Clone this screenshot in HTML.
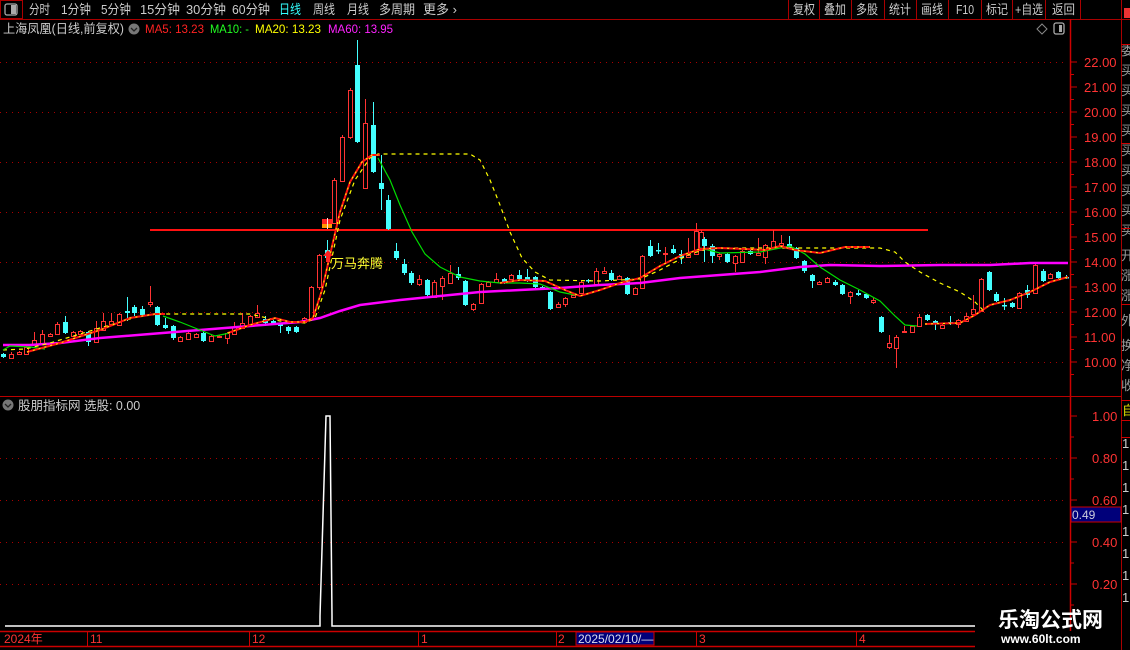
<!DOCTYPE html>
<html><head><meta charset="utf-8">
<style>
html,body{margin:0;padding:0;background:#000;width:1130px;height:650px;overflow:hidden}
svg{display:block}
text{font-family:"Liberation Sans","Noto Sans CJK SC",sans-serif}
</style></head>
<body>
<svg id="s" width="1130" height="650" xmlns="http://www.w3.org/2000/svg">
<rect width="1130" height="650" fill="#000"/>
<!-- top toolbar -->
<rect x="0.5" y="0.5" width="22" height="18" fill="none" stroke="#a00" stroke-width="1"/>
<rect x="5" y="4" width="12" height="11" rx="2" fill="none" stroke="#aaa" stroke-width="1.3"/>
<rect x="11" y="5" width="5" height="9" fill="#aaa"/>
<line x1="0" y1="19.5" x2="1130" y2="19.5" stroke="#a00"/>
<g font-size="13" fill="#ccc" lengthAdjust="spacingAndGlyphs">
<text x="29" y="14" textLength="21" lengthAdjust="spacingAndGlyphs">分时</text>
<text x="61" y="14" textLength="30" lengthAdjust="spacingAndGlyphs">1分钟</text>
<text x="101" y="14" textLength="30" lengthAdjust="spacingAndGlyphs">5分钟</text>
<text x="140" y="14" textLength="40" lengthAdjust="spacingAndGlyphs">15分钟</text>
<text x="186" y="14" textLength="40" lengthAdjust="spacingAndGlyphs">30分钟</text>
<text x="232" y="14" textLength="38" lengthAdjust="spacingAndGlyphs">60分钟</text>
<text x="279" y="14" textLength="22" lengthAdjust="spacingAndGlyphs" fill="#3ff">日线</text>
<text x="313" y="14" textLength="22" lengthAdjust="spacingAndGlyphs">周线</text>
<text x="347" y="14" textLength="22" lengthAdjust="spacingAndGlyphs">月线</text>
<text x="379" y="14" textLength="36" lengthAdjust="spacingAndGlyphs">多周期</text>
<text x="423" y="14" textLength="34" lengthAdjust="spacingAndGlyphs">更多 ›</text>
</g>
<g stroke="#a00"><line x1="788.5" y1="0" x2="788.5" y2="19"/><line x1="819.5" y1="0" x2="819.5" y2="19"/><line x1="851.5" y1="0" x2="851.5" y2="19"/><line x1="884.5" y1="0" x2="884.5" y2="19"/><line x1="916.5" y1="0" x2="916.5" y2="19"/><line x1="948.5" y1="0" x2="948.5" y2="19"/><line x1="981.5" y1="0" x2="981.5" y2="19"/><line x1="1012.5" y1="0" x2="1012.5" y2="19"/><line x1="1045.5" y1="0" x2="1045.5" y2="19"/><line x1="1080.5" y1="0" x2="1080.5" y2="19"/><line x1="1121.5" y1="0" x2="1121.5" y2="650"/></g>
<g font-size="13" fill="#ccc">
<text x="793" y="14" textLength="22" lengthAdjust="spacingAndGlyphs">复权</text>
<text x="824" y="14" textLength="22" lengthAdjust="spacingAndGlyphs">叠加</text>
<text x="856" y="14" textLength="22" lengthAdjust="spacingAndGlyphs">多股</text>
<text x="889" y="14" textLength="22" lengthAdjust="spacingAndGlyphs">统计</text>
<text x="921" y="14" textLength="22" lengthAdjust="spacingAndGlyphs">画线</text>
<text x="956" y="14" textLength="18" lengthAdjust="spacingAndGlyphs">F10</text>
<text x="986" y="14" textLength="22" lengthAdjust="spacingAndGlyphs">标记</text>
<text x="1015" y="14" textLength="28" lengthAdjust="spacingAndGlyphs">+自选</text>
<text x="1052" y="14" textLength="23" lengthAdjust="spacingAndGlyphs">返回</text>
</g>
<rect x="1124" y="8" width="6" height="10" fill="#e33"/>
<!-- title row -->
<text x="3" y="33" font-size="12.5" fill="#ccc" textLength="121" lengthAdjust="spacingAndGlyphs">上海凤凰(日线,前复权)</text>
<circle cx="134" cy="29" r="5.5" fill="#777"/><path d="M131 28 L134 31 L137 28" stroke="#222" stroke-width="1.3" fill="none"/>
<text x="145" y="33" font-size="12" fill="#f22" textLength="59" lengthAdjust="spacingAndGlyphs">MA5: 13.23</text>
<text x="210" y="33" font-size="12" fill="#2f2" textLength="39" lengthAdjust="spacingAndGlyphs">MA10: -</text>
<text x="255" y="33" font-size="12" fill="#ff0" textLength="66" lengthAdjust="spacingAndGlyphs">MA20: 13.23</text>
<text x="328" y="33" font-size="12" fill="#f2f" textLength="65" lengthAdjust="spacingAndGlyphs">MA60: 13.95</text>
<path d="M1037 29 L1042 24 L1047 29 L1042 34 Z" stroke="#888" fill="none"/>
<rect x="1054" y="23" width="10" height="11" rx="2" fill="none" stroke="#aaa" stroke-width="1.3"/><rect x="1059" y="25" width="3" height="7" fill="#aaa"/>
<!-- axes frame -->
<line x1="1070.5" y1="19" x2="1070.5" y2="631" stroke="#c00" stroke-width="1.5"/>
<line x1="0" y1="396.5" x2="1121" y2="396.5" stroke="#b00"/>
<line x1="0" y1="631.5" x2="975" y2="631.5" stroke="#c00" stroke-width="1.5"/>
<line x1="0" y1="646.5" x2="975" y2="646.5" stroke="#c00" stroke-width="1.5"/>
<g id="grid"></g>
<g id="cand"></g>
<g id="lines"></g>
<!-- signal -->
<rect x="322" y="219" width="10" height="5" fill="#f22"/><rect x="322" y="224" width="10" height="4" fill="#f90"/>
<line x1="327.5" y1="218" x2="327.5" y2="229" stroke="#fdd"/>
<path d="M323 256 L328 250 L333 256 L330 256 L330 262 L326 262 L326 256 Z" fill="#f22"/>
<text x="331" y="268" font-size="13" fill="#ff3">万马奔腾</text>
<!-- lower panel -->
<circle cx="8" cy="405" r="5.5" fill="#777"/><path d="M5 404 L8 407 L11 404" stroke="#222" stroke-width="1.3" fill="none"/>
<text x="18" y="410" font-size="12.5" fill="#ccc">股朋指标网 选股: 0.00</text>
<polyline points="5,626 320,626 320,616 326,416 330,416 332,616 332,626 975,626" fill="none" stroke="#fff" stroke-width="1.5"/>
<rect x="1071" y="507" width="50" height="15" fill="#00007a" stroke="#c00"/>
<text x="1072" y="519" font-size="12" fill="#ccd">0.49</text>
<!-- date axis -->
<g fill="#f33" font-size="12">
<text x="4" y="643">2024年</text><text x="90" y="643">11</text><text x="252" y="643">12</text><text x="421" y="643">1</text><text x="558" y="643">2</text><text x="699" y="643">3</text><text x="859" y="643">4</text>
</g>
<g stroke="#c00"><line x1="87.5" y1="631" x2="87.5" y2="646"/><line x1="249.5" y1="631" x2="249.5" y2="646"/><line x1="418.5" y1="631" x2="418.5" y2="646"/><line x1="556.5" y1="631" x2="556.5" y2="646"/><line x1="696.5" y1="631" x2="696.5" y2="646"/><line x1="856.5" y1="631" x2="856.5" y2="646"/></g>
<rect x="576" y="632" width="78" height="13" fill="#00007a" stroke="#c00"/>
<text x="578" y="643" font-size="12" fill="#dde">2025/02/10/—</text>
<!-- watermark -->
<text x="998" y="627" font-size="21" font-weight="bold" fill="#fff" font-family="'Liberation Serif','Noto Serif CJK SC',serif">乐淘公式网</text>
<text x="1001" y="643" font-size="12" font-weight="bold" fill="#fff" font-family="'Liberation Serif',serif">www.60lt.com</text>
<!-- right strip -->
<g fill="#999" font-size="13"><text x="1121" y="55">委</text><text x="1121" y="75">买</text><text x="1121" y="95">买</text><text x="1121" y="115">买</text><text x="1121" y="135">买</text><text x="1121" y="155">买</text><text x="1121" y="175">买</text><text x="1121" y="195">买</text><text x="1121" y="215">买</text><text x="1121" y="235">买</text><text x="1121" y="260">开</text><text x="1121" y="280">涨</text><text x="1121" y="300">涨</text><text x="1121" y="325">外</text><text x="1121" y="350">换</text><text x="1121" y="370">净</text><text x="1121" y="390">收</text></g>
<text x="1122" y="415" fill="#dd0" font-size="13">自</text>
<g fill="#ccc" font-size="13"><text x="1122" y="448">1</text><text x="1122" y="470">1</text><text x="1122" y="492">1</text><text x="1122" y="514">1</text><text x="1122" y="536">1</text><text x="1122" y="558">1</text><text x="1122" y="580">1</text><text x="1122" y="602">1</text></g>
<g stroke="#c00"><line x1="1121" y1="44.5" x2="1130" y2="44.5"/><line x1="1121" y1="143.5" x2="1130" y2="143.5"/><line x1="1121" y1="228.5" x2="1130" y2="228.5"/><line x1="1121" y1="304.5" x2="1130" y2="304.5"/><line x1="1121" y1="400.5" x2="1130" y2="400.5"/><line x1="1121" y1="420.5" x2="1130" y2="420.5"/><line x1="1121" y1="437.5" x2="1130" y2="437.5"/></g>
</svg>
<script>
var NS="http://www.w3.org/2000/svg";
function el(p,t,a){var e=document.createElementNS(NS,t);for(var k in a)e.setAttribute(k,a[k]);p.appendChild(e);return e;}
var g=document.getElementById('grid'),s=document.getElementById('s');
var prices=[22,21,20,19,18,17,16,15,14,13,12,11,10];
prices.forEach(function(p){var y=62+(22-p)*25;
 el(g,'line',{x1:1070,y1:y,x2:1077,y2:y,stroke:'#c00'});
 el(g,'line',{x1:1070,y1:y+12.5,x2:1074,y2:y+12.5,stroke:'#c00'});
 var t=el(g,'text',{x:1084,y:y+5,'font-size':13,fill:'#f33'});t.textContent=p.toFixed(2);
 if(p%2==0)el(g,'line',{x1:0,y1:y+0.5,x2:1068,y2:y+0.5,stroke:'#a00','stroke-dasharray':'1 5'});
});
[1.0,0.8,0.6,0.4,0.2].forEach(function(v){var y=416+(1-v)*210;
 el(g,'line',{x1:1070,y1:y,x2:1077,y2:y,stroke:'#c00'});
 el(g,'line',{x1:1070,y1:y+21,x2:1074,y2:y+21,stroke:'#c00'});
 var t=el(g,'text',{x:1092,y:y+5,'font-size':13,fill:'#f33'});t.textContent=v.toFixed(2);
 if(v<1)el(g,'line',{x1:0,y1:y+0.5,x2:1068,y2:y+0.5,stroke:'#a00','stroke-dasharray':'1 5'});
});
el(g,'line',{x1:150,y1:230,x2:928,y2:230,stroke:'#f11','stroke-width':2});
var C=[[1,354,357,353,358,'c'],[9,354,358,352,359,'r'],[17,352,354,351,355,'r'],[24,347,354,345,355,'r'],[32,340,344,332,345,'r'],[40,334,343,330,344,'r'],[48,334,336,333,337,'r'],[55,324,334,322,335,'r'],[63,322,333,316,334,'c'],[71,332,336,331,337,'r'],[78,331,334,330,335,'r'],[86,332,342,331,346,'c'],[94,328,342,321,343,'r'],[101,321,330,313,331,'r'],[109,321,324,313,325,'r'],[117,314,325,313,326,'r'],[125,311,313,297,321,'c'],[132,307,313,305,316,'c'],[140,309,315,306,316,'c'],[148,302,304,286,307,'r'],[155,307,325,306,326,'c'],[163,325,328,318,329,'c'],[171,326,338,325,340,'c'],[178,337,341,336,342,'r'],[186,333,339,332,340,'r'],[194,334,337,333,338,'r'],[201,333,341,332,342,'c'],[209,336,341,335,342,'r'],[217,336,337,335,338,'r'],[225,333,338,332,344,'r'],[232,327,334,322,335,'r'],[240,323,328,313,329,'r'],[248,316,324,315,325,'r'],[255,313,317,305,318,'r'],[263,319,323,316,326,'c'],[271,321,323,320,325,'c'],[278,324,326,323,333,'c'],[286,327,331,326,334,'c'],[294,327,332,326,333,'c'],[302,318,322,317,323,'r'],[309,287,318,286,319,'r'],[317,255,287,254,290,'r'],[325,250,258,240,262,'c'],[332,180,223,178,224,'r'],[340,137,181,135,182,'r'],[348,90,137,88,139,'r'],[355,65,142,40,143,'c'],[363,123,188,99,189,'r'],[371,125,172,102,173,'c'],[379,183,189,155,210,'c'],[386,200,229,195,230,'c'],[394,251,258,243,260,'c'],[402,264,273,259,275,'c'],[409,273,283,271,285,'c'],[417,279,284,275,286,'r'],[425,280,295,279,296,'c'],[432,282,297,280,298,'r'],[440,278,286,276,300,'r'],[448,273,283,265,284,'r'],[456,274,278,267,280,'c'],[463,281,305,280,306,'c'],[471,304,309,303,311,'r'],[479,284,303,283,304,'r'],[486,282,286,281,287,'r'],[494,279,282,273,283,'r'],[502,279,283,278,284,'c'],[509,275,279,274,280,'r'],[517,275,279,270,280,'c'],[525,277,281,269,282,'c'],[533,277,287,276,288,'c'],[540,287,289,286,290,'c'],[548,292,309,291,310,'c'],[556,304,307,302,308,'r'],[563,298,304,297,307,'r'],[571,295,297,293,298,'r'],[579,282,293,281,294,'r'],[586,280,281,279,283,'c'],[594,271,284,268,285,'r'],[602,271,273,267,274,'r'],[609,273,280,270,281,'c'],[617,276,279,275,280,'r'],[625,278,294,277,295,'c'],[633,288,294,287,295,'r'],[640,256,288,255,289,'r'],[648,246,256,240,257,'c'],[656,250,251,243,254,'c'],[663,253,254,247,263,'r'],[671,249,253,245,254,'c'],[679,254,258,250,264,'c'],[686,255,257,238,258,'r'],[694,231,254,223,255,'r'],[699,232,250,230,251,'r'],[702,239,246,237,262,'c'],[710,246,256,244,263,'c'],[717,254,256,253,260,'r'],[725,254,262,253,263,'c'],[733,256,263,255,272,'r'],[740,251,262,250,263,'r'],[748,251,254,250,255,'c'],[756,253,255,238,256,'r'],[763,245,257,244,264,'r'],[771,241,247,230,248,'r'],[779,243,245,235,247,'r'],[787,244,248,236,249,'c'],[794,248,258,247,259,'c'],[802,261,271,260,273,'c'],[810,275,281,274,288,'c'],[817,282,284,281,285,'r'],[825,278,282,277,283,'r'],[833,282,285,280,286,'c'],[840,285,294,284,295,'c'],[848,292,296,291,304,'r'],[856,293,295,290,296,'c'],[864,294,298,293,299,'c'],[871,300,302,298,304,'r'],[879,317,332,316,333,'c'],[887,343,347,335,349,'r'],[894,337,348,335,368,'r'],[902,331,332,326,333,'r'],[910,326,332,325,333,'r'],[917,317,326,314,327,'r'],[925,315,320,314,321,'c'],[933,321,324,320,330,'c'],[940,325,328,324,329,'r'],[948,322,324,316,325,'c'],[956,320,324,319,328,'r'],[964,316,321,313,322,'r'],[971,309,314,295,315,'r'],[979,279,311,278,312,'r'],[987,272,290,271,291,'c'],[994,294,301,292,302,'c'],[1002,305,306,298,310,'c'],[1010,303,307,302,308,'c'],[1017,293,308,292,309,'r'],[1025,290,295,285,298,'c'],[1033,265,293,264,294,'r'],[1041,271,281,269,282,'c'],[1048,274,278,273,279,'r'],[1056,272,278,271,279,'c'],[1064,277,278,275,279,'c']];
var cg=document.getElementById('cand');
C.forEach(function(c){var x=c[0],w=5,cx=x+2.5;
 if(c[5]=='r'){
  el(cg,'line',{x1:cx,y1:c[3],x2:cx,y2:c[1],stroke:'#f33'});
  el(cg,'line',{x1:cx,y1:c[2],x2:cx,y2:c[4],stroke:'#f33'});
  el(cg,'rect',{x:x+0.5,y:c[1]+0.5,width:w-1,height:Math.max(c[2]-c[1],1),fill:'none',stroke:'#f33'});
 }else{
  el(cg,'line',{x1:cx,y1:c[3],x2:cx,y2:c[4],stroke:'#4ff'});
  el(cg,'rect',{x:x,y:c[1],width:w,height:Math.max(c[2]-c[1],1.5),fill:'#4ff'});
 }
});
var lg=document.getElementById('lines');
function pl(pts,attrs){attrs.points=pts;attrs.fill='none';el(lg,'polyline',attrs);}
pl("3,345 30,345 60,343 100,338 150,334 200,330 250,326 300,322 320,318 340,311 360,305 400,300 440,296 480,292 520,290 560,288 600,285 640,283 680,278 720,275 760,272 800,267 830,265 880,266 940,265 990,265 1030,263 1068,263",{stroke:'#f0f','stroke-width':2.5});
pl("3,350 25,349 50,343 100,328 140,316 160,314 250,314 280,321 305,323 315,318 325,290 340,220 355,180 370,158 378,154 470,154 480,160 490,180 500,205 510,232 522,258 535,272 550,280 600,281 640,279 660,270 690,254 710,248 880,248 895,252 905,262 920,272 940,283 960,292 975,302 983,310",{stroke:'#ff0','stroke-width':1.2,'stroke-dasharray':'4 4'});
pl("3,350 10,346 30,347 45,349",{stroke:'#0d0','stroke-width':1.2});
pl("163,316 180,322 200,330 215,336 230,333",{stroke:'#0d0','stroke-width':1.2});
pl("378,158 390,180 400,205 412,232 425,254 440,267 460,277 480,281 500,283 520,283 540,284 560,292 575,295",{stroke:'#0d0','stroke-width':1.2});
pl("700,248 720,253 760,252 790,246 805,254 820,267 840,280 860,290 880,301 895,316 905,325 917,326",{stroke:'#0d0','stroke-width':1.2});
var m5=["27,352 60,343 100,330 130,318 155,314 165,314","228,333 250,325 275,318 290,322 305,322 313,318 322,290 330,255 340,212 350,182 362,162 372,155 380,155","500,283 520,280 545,281 565,290 580,296 600,290 620,283 640,278 660,266 680,256 700,249 720,248 745,249 765,250 780,246 795,250 820,253 845,247 870,247","925,324 960,323 975,315 990,305 1010,300 1030,292 1050,282 1068,277"];
m5.forEach(function(p){pl(p,{stroke:'#f11','stroke-width':2});pl(p,{stroke:'#ff0','stroke-width':1,'stroke-dasharray':'2 4'});});
</script>
</body></html>
